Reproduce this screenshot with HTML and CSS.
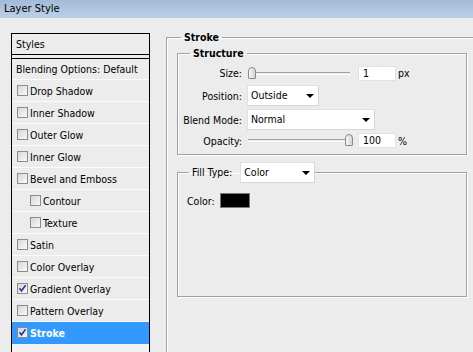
FILE: index.html
```html
<!DOCTYPE html>
<html>
<head>
<meta charset="utf-8">
<link rel="stylesheet" href="styles.css">
</head>
<body>
<div class="titlebar">Layer Style</div>
<div class="main">
  <div class="styles-panel">
    <div class="panel-head">Styles</div>
    <div class="style-list">
      <div class="row plain">Blending Options: Default</div>
      <div class="row"><span class="cb"></span>Drop Shadow</div>
      <div class="row"><span class="cb"></span>Inner Shadow</div>
      <div class="row"><span class="cb"></span>Outer Glow</div>
      <div class="row"><span class="cb"></span>Inner Glow</div>
      <div class="row"><span class="cb"></span>Bevel and Emboss</div>
      <div class="row sub"><span class="cb"></span>Contour</div>
      <div class="row sub"><span class="cb"></span>Texture</div>
      <div class="row"><span class="cb"></span>Satin</div>
      <div class="row"><span class="cb"></span>Color Overlay</div>
      <div class="row"><span class="cb checked"><svg viewBox="0 0 9 9" width="9" height="9"><path d="M1.5 4.2 L3.5 6.8 L7.6 1.2" fill="none" stroke="#2a3c9a" stroke-width="1.6"/></svg></span>Gradient Overlay</div>
      <div class="row"><span class="cb"></span>Pattern Overlay</div>
      <div class="row selected"><span class="cb checked"><svg viewBox="0 0 9 9" width="9" height="9"><path d="M1.5 4.2 L3.5 6.8 L7.6 1.2" fill="none" stroke="#2a3c9a" stroke-width="1.6"/></svg></span>Stroke</div>
    </div>
  </div>

  <fieldset class="group stroke">
    <legend class="lg bold lg-stroke">Stroke</legend>
    <fieldset class="group structure">
      <legend class="lg bold lg-structure">Structure</legend>
      <div class="form">
        <div class="lbl">Size:</div>
        <div class="ctl">
          <div class="slider"><div class="track"></div><div class="thumb"></div></div>
          <div class="num">1</div><span class="unit">px</span>
        </div>
        <div class="lbl">Position:</div>
        <div class="ctl"><div class="select w-pos">Outside<span class="arrow"></span></div></div>
        <div class="lbl">Blend Mode:</div>
        <div class="ctl"><div class="select w-blend">Normal<span class="arrow"></span></div></div>
        <div class="lbl">Opacity:</div>
        <div class="ctl">
          <div class="slider"><div class="track"></div><div class="thumb end"></div></div>
          <div class="num">100</div><span class="unit">%</span>
        </div>
      </div>
    </fieldset>
    <fieldset class="group fill">
      <legend class="lg lg-fill"><span class="fill-lbl">Fill Type:</span><div class="select w-fill">Color<span class="arrow"></span></div></legend>
      <div class="color-row">Color:<span class="swatch"></span></div>
    </fieldset>
  </fieldset>
</div>
</body>
</html>
```
FILE: styles.css
```css
html, body {
  margin: 0;
  padding: 0;
  background: #ececec;
  width: 473px;
  height: 352px;
  overflow: hidden;
  font-family: "DejaVu Sans Condensed", "DejaVu Sans", sans-serif;
  font-size: 10.5px;
  color: #000;
}

.titlebar {
  height: 18px;
  line-height: 18px;
  padding-left: 4px;
  font-size: 11px;
  background: linear-gradient(#a3bbd8, #bcd0e8);
}

.main {
  display: flex;
  align-items: flex-start;
  height: 334px;
}

.styles-panel {
  margin: 15px 0 0 11px;
  width: 137px;
  height: 318px;
  border: 1px solid #000;
  border-bottom: none;
  flex: none;
  display: flex;
  flex-direction: column;
}

.panel-head {
  height: 20px;
  line-height: 20px;
  padding-left: 4px;
  border-bottom: 1px solid #000;
}

.style-list {
  margin-top: 3px;
  border-top: 1px solid #000;
  background: #f2f2f2;
  flex: 1;
}

.row {
  height: 21px;
  border-bottom: 1px solid #fbfbfb;
  background: #ececec;
  display: flex;
  align-items: center;
  padding-left: 5px;
  white-space: nowrap;
}

.row.plain {
  padding-left: 4px;
  height: 20px;
}

.row.sub {
  padding-left: 18px;
}

.row.selected {
  background: #3399ff;
  color: #fff;
  font-weight: bold;
  border-bottom-color: #3399ff;
}

.cb {
  width: 9px;
  height: 9px;
  border: 1px solid #8c8c8c;
  background: linear-gradient(135deg, #d6d6d6, #fafafa);
  margin-right: 2px;
  display: inline-flex;
  flex: none;
}

.row.selected .cb {
  background: linear-gradient(135deg, #c9d4e6, #f4f6fa);
}

/* fieldsets */
.group {
  margin: 0;
  padding: 0;
  border: 1px solid #a0a0a0;
  box-shadow: inset 1px 1px #fff, 1px 1px #fff;
  min-width: 0;
}

.lg {
  padding: 0 3px;
  line-height: 13px;
}

.bold {
  font-weight: bold;
}

.stroke {
  margin: 13px 0 0 16px;
  flex: 1;
  height: 321px;
  box-sizing: border-box;
  border-right: none;
  border-bottom: none;
}

.lg-stroke {
  margin-left: 14px;
}

.structure {
  margin: 3px 0 0 10px;
  width: 288px;
  padding: 4px 0 6px 0;
}

.lg-structure {
  margin-left: 12px;
}

.form {
  display: grid;
  grid-template-columns: 60px auto;
  grid-template-rows: 18px 21px 21px 15px;
  column-gap: 5px;
  row-gap: 3px;
  margin-left: 4px;
  align-items: center;
}

.lbl {
  text-align: right;
  white-space: nowrap;
}

.ctl {
  display: flex;
  align-items: center;
}

.slider {
  position: relative;
  width: 105px;
  height: 13px;
  margin-left: 1px;
}

.track {
  position: absolute;
  left: 0;
  right: 3px;
  top: 5px;
  height: 1px;
  border-top: 1px solid #a0a0a0;
  border-bottom: 1px solid #fff;
}

.thumb {
  position: absolute;
  left: 0;
  top: 0;
  width: 6px;
  height: 10px;
  border: 1px solid #8a8a8a;
  border-radius: 4px 4px 1px 1px;
  background: linear-gradient(90deg, #f8f8f8, #d4d4d4);
}

.thumb.end {
  left: 97px;
}

.num {
  width: 32px;
  height: 13px;
  line-height: 13px;
  padding-left: 4px;
  background: #fff;
  border: 1px solid #e2e2e2;
  margin-left: 5px;
}

.unit {
  margin-left: 2px;
}

.select {
  position: relative;
  height: 19px;
  line-height: 19px;
  padding-left: 3px;
  background: #fff;
  border: 1px solid #e0e0e0;
  border-right-color: #d6d6d6;
  border-bottom-color: #d6d6d6;
}

.w-pos { width: 67px; }
.w-blend { width: 123px; }
.w-fill { width: 70px; }

.arrow {
  position: absolute;
  right: 4px;
  top: 8px;
  width: 0;
  height: 0;
  border-left: 4px solid transparent;
  border-right: 4px solid transparent;
  border-top: 4px solid #000;
}

.fill {
  margin: 7px 0 0 10px;
  width: 288px;
  height: 133px;
}

.lg-fill {
  margin-left: 11px;
  display: flex;
  align-items: center;
  padding: 0 0 0 3px;
  line-height: 21px;
}

.fill-lbl {
  margin-right: 8px;
}

.color-row {
  display: flex;
  align-items: center;
  padding: 10px 0 0 9px;
}

.swatch {
  width: 28px;
  height: 13px;
  margin-left: 5px;
  background: #000;
  border: 1px solid #7a7a7a;
}
```
